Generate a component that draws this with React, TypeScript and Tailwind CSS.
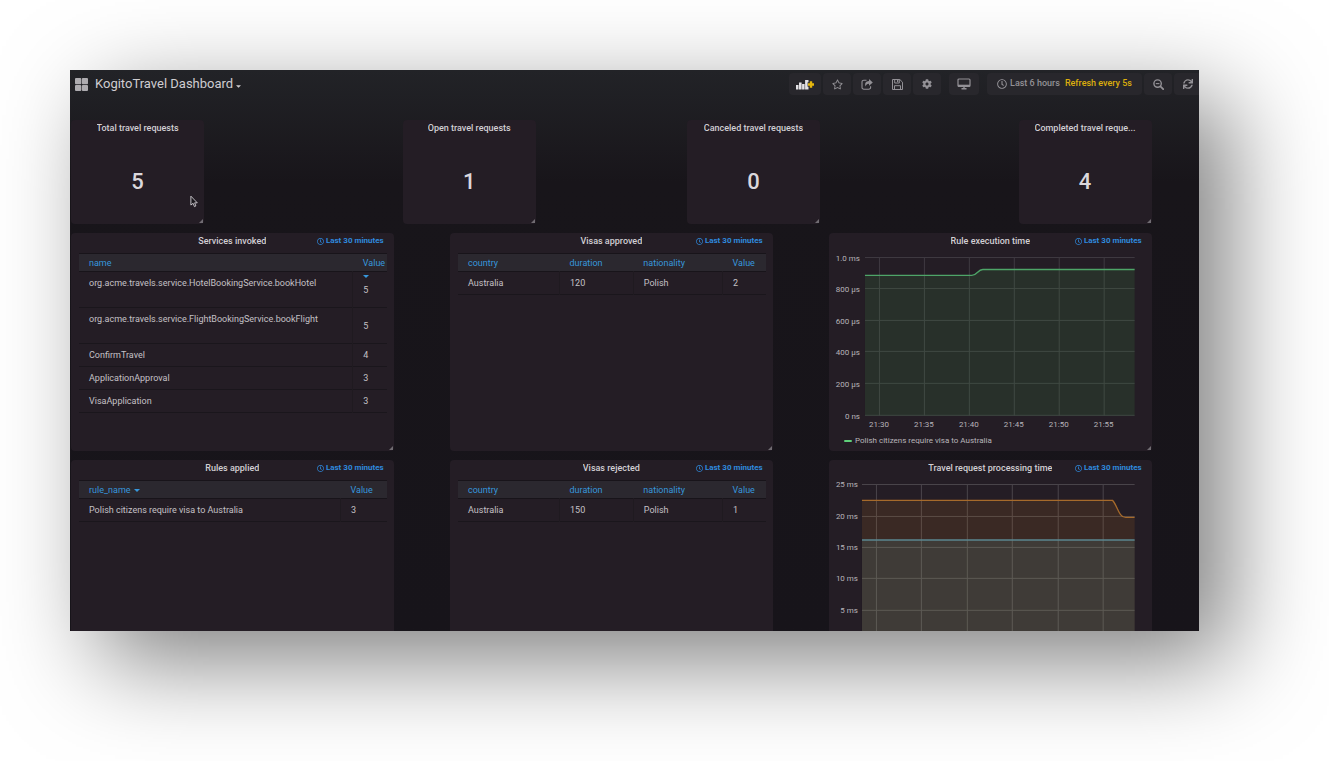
import React from "react";
import { FaCog, FaRegClock, FaRegStar, FaSearchMinus, FaSync } from "react-icons/fa";

type Column = { label: string; width: string; sort?: "inline" | "below" };
type Row = { cells: string[]; tall?: boolean };

function Caret({ className = "h-[3px] w-[6px]" }: { className?: string }) {
  return (
    <svg viewBox="0 0 6 3" className={className} aria-hidden="true">
      <path d="M0 0H6L3 3Z" fill="currentColor" />
    </svg>
  );
}

function Panel({
  title,
  place,
  range = true,
  children,
}: {
  title: string;
  place: string;
  range?: boolean;
  children: React.ReactNode;
}) {
  return (
    <section className={`relative flex min-w-0 flex-col rounded-sm bg-[#241d25] ${place}`}>
      <header className="relative flex h-5 shrink-0 items-start justify-center px-[14px]">
        <h2 className="truncate text-[9px] leading-[17px] font-medium text-[#d2cfd4]">{title}</h2>
        {range && (
          <span className="absolute top-0 right-[10px] flex h-4 items-center gap-[2px] text-[8px] font-bold text-[#2f8ade]">
            <FaRegClock className="size-[7px]" aria-hidden="true" />
            Last 30 minutes
          </span>
        )}
      </header>
      {children}
      <svg viewBox="0 0 4 4" className="absolute right-px bottom-px size-1" aria-hidden="true">
        <path d="M4 0V4H0Z" fill="#706c72" />
      </svg>
    </section>
  );
}

function Stat({ title, value, place }: { title: string; value: string; place: string }) {
  return (
    <Panel title={title} place={place} range={false}>
      <p className="flex flex-1 items-center justify-center text-[22px] leading-6 font-medium text-[#dad7dc]">
        {value}
      </p>
    </Panel>
  );
}

function DataTable({ columns, rows }: { columns: Column[]; rows: Row[] }) {
  return (
    <div className="pr-[7px] pl-2">
      <table className="w-full table-fixed border-collapse text-left text-[9px] leading-3">
        <thead>
          <tr className="h-[18px] border-y border-[#18141a] bg-[#2b282f] text-[#3797dc]">
            {columns.map((c) => (
              <th key={c.label} className={`relative p-0 pl-[10px] font-normal ${c.width}`}>
                {c.label}
                {c.sort === "inline" && <Caret className="ml-[3px] inline-block h-[3px] w-[6px] align-middle" />}
                {c.sort === "below" && <Caret className="absolute top-[21px] left-[10px] h-[3px] w-[6px]" />}
              </th>
            ))}
          </tr>
        </thead>
        <tbody className="text-[#c4c1c6]">
          {rows.map((r) => (
            <tr key={r.cells[0]} className={`border-b border-[#1a161c] ${r.tall ? "h-9" : "h-[23px]"}`}>
              {r.cells.map((cell, i) => (
                <td
                  key={i}
                  className={`p-0 pl-[10px] whitespace-nowrap ${i > 0 ? "border-l border-[#1f1a20]" : ""} ${
                    r.tall && i === 0 ? "pb-[14px]" : ""
                  }`}
                >
                  {cell}
                </td>
              ))}
            </tr>
          ))}
        </tbody>
      </table>
    </div>
  );
}

const visaColumns: Column[] = [
  { label: "country", width: "w-[33%]" },
  { label: "duration", width: "w-[24%]" },
  { label: "nationality", width: "w-[29%]" },
  { label: "Value", width: "w-[14%]" },
];

function RuleChart() {
  const xs = [50, 95, 140, 185, 230, 275];
  const ys = [6, 37, 69, 100, 132, 164];
  const labels = ["1.0 ms", "800 µs", "600 µs", "400 µs", "200 µs", "0 ns"];
  const times = ["21:30", "21:35", "21:40", "21:45", "21:50", "21:55"];
  return (
    <svg viewBox="0 1 323 179" className="block w-full text-[8px]" role="img" aria-label="Rule execution time">
      <g stroke="#3f3a41">
        {ys.map((y) => (
          <line key={y} x1="36" x2="306" y1={y - 0.5} y2={y - 0.5} />
        ))}
        {xs.map((x) => (
          <line key={x} x1={x + 0.5} x2={x + 0.5} y1="6" y2="164" />
        ))}
      </g>
      <path d="M36 23.5H143C148 23.5 149 17.5 154 17.5H306V164H36Z" fill="#48b050" fillOpacity="0.13" />
      <path d="M36 23.5H143C148 23.5 149 17.5 154 17.5H306" fill="none" stroke="#4ea568" strokeWidth="1.3" />
      <g fill="#b8b5ba">
        {ys.map((y, i) => (
          <text key={y} x="31" y={y + 3} textAnchor="end">
            {labels[i]}
          </text>
        ))}
        {times.map((t, i) => (
          <text key={t} x={xs[i]} y="175" textAnchor="middle">
            {t}
          </text>
        ))}
      </g>
    </svg>
  );
}

function ProcessingChart() {
  const ys = [6, 38, 69, 100, 132];
  const labels = ["25 ms", "20 ms", "15 ms", "10 ms", "5 ms"];
  const xs = [48, 93, 139, 184, 230, 275];
  return (
    <svg
      viewBox="0 1 323 179"
      className="block w-full text-[8px]"
      role="img"
      aria-label="Travel request processing time"
    >
      <g stroke="#4a454b">
        {ys.map((y) => (
          <line key={y} x1="33" x2="306" y1={y - 0.5} y2={y - 0.5} />
        ))}
        {xs.map((x) => (
          <line key={x} x1={x - 0.5} x2={x - 0.5} y1="6" y2="164" />
        ))}
      </g>
      <path d="M33 21.5H284C289 27 290 38.5 297 38.5H306V164H33Z" fill="#e08020" fillOpacity="0.12" />
      <path d="M33 61H306V164H33Z" fill="#68b8b8" fillOpacity="0.13" />
      <path d="M33 21.5H284C289 27 290 38.5 297 38.5H306" fill="none" stroke="#a66a2b" strokeWidth="1.3" />
      <path d="M33 61H306" stroke="#5b8790" strokeWidth="1.6" />
      <g fill="#b8b5ba">
        {ys.map((y, i) => (
          <text key={y} x="29" y={y + 2} textAnchor="end">
            {labels[i]}
          </text>
        ))}
      </g>
    </svg>
  );
}

function ToolButton({
  label,
  className = "w-7",
  children,
}: {
  label: string;
  className?: string;
  children: React.ReactNode;
}) {
  return (
    <button
      type="button"
      aria-label={label}
      className={`flex h-[22px] shrink-0 items-center justify-center rounded-sm bg-[#28272c] text-[#939196] ${className}`}
    >
      {children}
    </button>
  );
}

function Toolbar() {
  return (
    <div className="flex h-7 shrink-0 items-center justify-between overflow-hidden pl-[5px]">
      <button type="button" className="flex items-center gap-[7px] text-[13px] leading-5 text-[#cfcdd1]">
        <svg viewBox="0 0 13 13" className="size-[13px]" fill="#aeacb0" aria-hidden="true">
          <rect width="6.3" height="6.3" rx="1" />
          <rect x="6.9" width="6.1" height="6.3" rx="1" />
          <rect y="6.9" width="6.3" height="6.1" rx="1" />
          <rect x="6.9" y="6.9" width="6.1" height="6.1" rx="1" />
        </svg>
        <span>KogitoTravel Dashboard</span>
        <Caret className="mt-1 -ml-1 h-[3px] w-[5px]" />
      </button>
      <div className="flex items-center gap-2">
        <div className="flex gap-[2px]">
          <ToolButton label="Add panel" className="w-8">
            <svg viewBox="0 0 18 11" className="h-[11px] w-[18px]" aria-hidden="true">
              <path
                d="M0 6H2.5V10.5H0ZM3 3.5H5.6V10.5H3ZM6.1 5H8.6V10.5H6.1ZM9.1 1H12.5V3.3H11.6V7.7H12.5V10.5H9.1Z"
                fill="#e4e2e6"
              />
              <path d="M13.8 2.2H16.2V4.3H18V6.7H16.2V8.8H13.8V6.7H12V4.3H13.8Z" fill="#e5b70e" />
            </svg>
          </ToolButton>
          <ToolButton label="Star">
            <FaRegStar className="size-[11px]" />
          </ToolButton>
          <ToolButton label="Share">
            <svg viewBox="0 0 12 11" className="h-[11px] w-3" aria-hidden="true">
              <path
                d="M5.5 1.2H2.8A1.8 1.8 0 0 0 1 3V8.4A1.8 1.8 0 0 0 2.8 10.2H7.8A1.8 1.8 0 0 0 9.6 8.4V7.2"
                fill="none"
                stroke="currentColor"
                strokeWidth="1.1"
              />
              <path d="M8 0L11.8 3.4L8 6.8V4.8C6 4.8 5 5.6 4.8 7.6C3.2 4.6 4.8 2.2 8 2.1Z" fill="currentColor" />
            </svg>
          </ToolButton>
          <ToolButton label="Save">
            <svg
              viewBox="0 0 11 11"
              className="size-[11px]"
              fill="none"
              stroke="currentColor"
              strokeWidth="1"
              aria-hidden="true"
            >
              <path d="M1 .5H7.8L10.5 3.2V10.5H.5V.5Z" />
              <path d="M2.7 .5V4H7.3V.5M2.5 10.5V6.7H8.5V10.5" />
              <path d="M5 1H6.3V3H5Z" fill="currentColor" stroke="none" />
            </svg>
          </ToolButton>
          <ToolButton label="Settings">
            <FaCog className="size-[10px]" />
          </ToolButton>
        </div>
        <ToolButton label="Cycle view mode" className="w-[30px]">
          <svg viewBox="0 0 14 12" className="h-3 w-[14px]" fill="none" stroke="currentColor" aria-hidden="true">
            <rect x="1" y="1" width="12" height="7.5" rx="1" strokeWidth="1.2" />
            <path d="M1 7.6H13" strokeWidth="1.8" />
            <path d="M7 8V10.5M4.5 10.7H9.5" strokeWidth="1.4" />
          </svg>
        </ToolButton>
        <div className="-mr-[3px] flex gap-[2px]">
          <button
            type="button"
            className="flex h-[22px] w-[155px] shrink-0 items-center justify-center rounded-sm bg-[#28272c] text-[9px] whitespace-nowrap text-[#939196]"
          >
            <FaRegClock className="mr-[3px] size-[10px]" aria-hidden="true" />
            <span className="font-medium">Last 6 hours</span>
            <span className="ml-[5px] font-medium text-[#dcae0c]">Refresh every 5s</span>
          </button>
          <ToolButton label="Zoom out">
            <svg viewBox="0 0 11 11" className="size-[11px]" fill="none" stroke="currentColor" aria-hidden="true">
              <circle cx="4.6" cy="4.6" r="3.7" strokeWidth="1.4" />
              <path d="M2.8 4.6H6.4" strokeWidth="1.1" />
              <path d="M7.4 7.4L10.2 10.2" strokeWidth="1.8" strokeLinecap="round" />
            </svg>
          </ToolButton>
          <ToolButton label="Refresh">
            <FaSync className="size-[10px]" />
          </ToolButton>
        </div>
      </div>
    </div>
  );
}

export default function App() {
  return (
    <div className="flex h-screen flex-col bg-white pt-[70px] pr-[130px] pb-[130px] pl-[70px] font-['Roboto',sans-serif]">
      <main className="relative flex min-h-0 flex-1 flex-col overflow-hidden bg-linear-to-b from-[#222327] via-[#18151a] via-20% to-[#17141a] shadow-[30px_30px_90px_rgba(0,0,0,0.5)]">
        <Toolbar />
        <div className="mt-[22px] grid shrink-0 grid-cols-24 grid-rows-[104px_218px_218px] gap-x-[9px] gap-y-[9px] pl-px">
          <Stat title="Total travel requests" value="5" place="col-start-1 col-span-3" />
          <Stat title="Open travel requests" value="1" place="col-start-8 col-span-3" />
          <Stat title="Canceled travel requests" value="0" place="col-start-14 col-span-3" />
          <Stat title="Completed travel reque..." value="4" place="col-start-21 col-span-3" />

          <Panel title="Services invoked" place="col-start-1 col-span-7">
            <DataTable
              columns={[
                { label: "name", width: "w-[89%]" },
                { label: "Value", width: "w-[11%]", sort: "below" },
              ]}
              rows={[
                { cells: ["org.acme.travels.service.HotelBookingService.bookHotel", "5"], tall: true },
                { cells: ["org.acme.travels.service.FlightBookingService.bookFlight", "5"], tall: true },
                { cells: ["ConfirmTravel", "4"] },
                { cells: ["ApplicationApproval", "3"] },
                { cells: ["VisaApplication", "3"] },
              ]}
            />
          </Panel>
          <Panel title="Visas approved" place="col-start-9 col-span-7">
            <DataTable columns={visaColumns} rows={[{ cells: ["Australia", "120", "Polish", "2"] }]} />
          </Panel>
          <Panel title="Rule execution time" place="col-start-17 col-span-7">
            <RuleChart />
            <div className="flex items-center gap-[3px] px-[15px] pt-[3px] text-[8px] leading-3 text-[#b8b5ba]">
              <span className="h-[2px] w-2 rounded-full bg-[#5fcf7a]" />
              Polish citizens require visa to Australia
            </div>
          </Panel>

          <Panel title="Rules applied" place="col-start-1 col-span-7">
            <DataTable
              columns={[
                { label: "rule_name", width: "w-[85%]", sort: "inline" },
                { label: "Value", width: "w-[15%]" },
              ]}
              rows={[{ cells: ["Polish citizens require visa to Australia", "3"] }]}
            />
          </Panel>
          <Panel title="Visas rejected" place="col-start-9 col-span-7">
            <DataTable columns={visaColumns} rows={[{ cells: ["Australia", "150", "Polish", "1"] }]} />
          </Panel>
          <Panel title="Travel request processing time" place="col-start-17 col-span-7">
            <ProcessingChart />
          </Panel>
        </div>
        <svg viewBox="0 0 9 14" className="absolute top-[125px] left-[120px] h-[13px] w-2" aria-hidden="true">
          <path d="M1 1V11L3.5 9L5 12.8L6.6 12L5.2 8.5H8.2Z" fill="#1a171c" stroke="#d5d2d7" strokeWidth="1" />
        </svg>
      </main>
    </div>
  );
}
